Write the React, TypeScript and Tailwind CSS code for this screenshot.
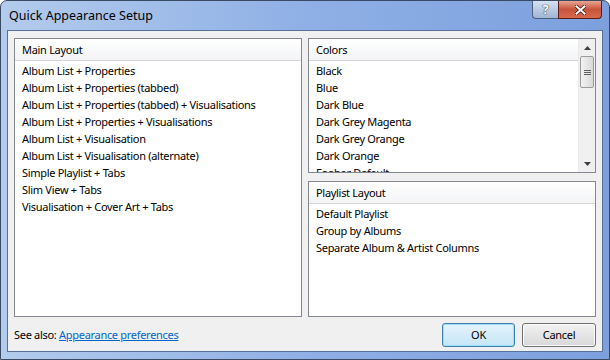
import React from 'react';

const mainLayouts = [
  'Album List + Properties',
  'Album List + Properties (tabbed)',
  'Album List + Properties (tabbed) + Visualisations',
  'Album List + Properties + Visualisations',
  'Album List + Visualisation',
  'Album List + Visualisation (alternate)',
  'Simple Playlist + Tabs',
  'Slim View + Tabs',
  'Visualisation + Cover Art + Tabs',
];

const colors = ['Black', 'Blue', 'Dark Blue', 'Dark Grey Magenta', 'Dark Grey Orange', 'Dark Orange', 'Foobar Default'];

const playlistLayouts = ['Default Playlist', 'Group by Albums', 'Separate Album & Artist Columns'];

const ListPanel: React.FC<{ title: string; items: string[]; className?: string; scroll?: boolean }> = ({
  title,
  items,
  className = '',
  scroll = false,
}) => (
  <div className={`flex border border-[#828790] bg-white overflow-hidden ${className}`}>
    <div className="flex-1 flex flex-col min-w-0 overflow-hidden">
      {/* header */}
      <div className="h-[22px] shrink-0 flex items-center pl-[7px] pt-[1px] bg-gradient-to-b from-white to-[#f3f4f6] border-b border-[#d5d5d5]">
        {title}
      </div>
      <div className="pt-[2px]">
        {items.map((it) => (
          <div key={it} className="h-[17px] flex items-center pl-[7px] whitespace-nowrap">
            {it}
          </div>
        ))}
      </div>
    </div>
    {scroll && (
      <div className="w-[17px] shrink-0 flex flex-col bg-[#f0f0f0] border-l border-[#eaeaea]">
        <div className="h-[17px] flex items-center justify-center">
          <svg width="7" height="4" viewBox="0 0 7 4">
            <path d="M0 4 L3.5 0 L7 4 Z" fill="#404040" />
          </svg>
        </div>
        <div className="mx-[1px] h-[32px] rounded-[2px] border border-[#9a9a9a] bg-gradient-to-r from-[#f3f3f3] to-[#d9d9d9] flex items-center justify-center">
          <svg width="7" height="7" viewBox="0 0 7 7">
            <path d="M0 1.5 H7 M0 3.5 H7 M0 5.5 H7" stroke="#606060" strokeWidth="1" />
          </svg>
        </div>
        <div className="flex-1" />
        <div className="h-[17px] flex items-center justify-center">
          <svg width="7" height="4" viewBox="0 0 7 4">
            <path d="M0 0 L3.5 4 L7 0 Z" fill="#404040" />
          </svg>
        </div>
      </div>
    )}
  </div>
);

const App: React.FC = () => {
  return (
    <div
      className="w-[610px] h-[360px] flex flex-col rounded-t-[7px] border border-[#3a4a63] bg-gradient-to-r from-[#b3cbec] via-[#8fb0e6] to-[#7ca0de] text-[11px] tracking-[-0.3px] text-black overflow-hidden"
      style={{ fontFamily: '"Noto Sans", "Open Sans", sans-serif' }}
    >
      {/* title bar */}
      <div className="h-[29px] shrink-0 flex items-start">
        <div className="pl-[8px] pt-[6px] text-[12.5px] tracking-normal text-black">Quick Appearance Setup</div>
        <div className="flex-1" />
        <div className="flex mr-[7px]">
          <div className="w-[26px] h-[18px] rounded-bl-[4px] border border-[#4c5f7d] border-t-0 border-r-0 bg-gradient-to-b from-[#d6e2f2] to-[#9fb5d4] flex items-center justify-center">
            <span className="text-[13px] font-bold text-white leading-none" style={{ textShadow: '0 0 1px #222, 0 0 1px #222' }}>
              ?
            </span>
          </div>
          <div className="w-[44px] h-[18px] rounded-br-[4px] border border-[#5c1d14] border-t-0 bg-gradient-to-b from-[#e8a493] via-[#c8533a] to-[#d66a4e] flex items-center justify-center">
            <svg width="11" height="10" viewBox="0 0 11 10">
              <path d="M1.5 1.5 L9.5 8.5 M9.5 1.5 L1.5 8.5" stroke="#3a1a10" strokeWidth="3.6" strokeLinecap="square" />
              <path d="M1.5 1.5 L9.5 8.5 M9.5 1.5 L1.5 8.5" stroke="#ffffff" strokeWidth="2" strokeLinecap="square" />
            </svg>
          </div>
        </div>
      </div>

      {/* client area */}
      <div className="flex-1 flex flex-col mx-[6px] mb-[7px] border border-[#56709a] bg-[#f0f0f0] px-[6px] pt-[7px]">
        <div className="flex gap-[6px] h-[279px]">
          <ListPanel title="Main Layout" items={mainLayouts} className="w-[288px]" />
          <div className="w-[288px] flex flex-col gap-[8px]">
            <ListPanel title="Colors" items={colors} className="h-[135px]" scroll />
            <ListPanel title="Playlist Layout" items={playlistLayouts} className="flex-1" />
          </div>
        </div>
        <div className="flex items-center mt-[6px]">
          <div className="pt-[1px]">
            See also: <span className="text-[#0066cc] underline">Appearance preferences</span>
          </div>
          <div className="flex-1" />
          <div className="flex gap-[7px]">
            <div className="w-[73px] h-[24px] rounded-[3px] border border-[#3c7fb1] bg-gradient-to-b from-[#e5f4fc] to-[#c4e5f6] shadow-[inset_0_0_0_1px_#9cdff7] flex items-center justify-center">
              OK
            </div>
            <div className="w-[74px] h-[24px] rounded-[3px] border border-[#707070] bg-gradient-to-b from-[#f2f2f2] to-[#d8d8d8] shadow-[inset_0_0_0_1px_#fcfcfc] flex items-center justify-center">
              Cancel
            </div>
          </div>
        </div>
      </div>
    </div>
  );
};

export default App;
